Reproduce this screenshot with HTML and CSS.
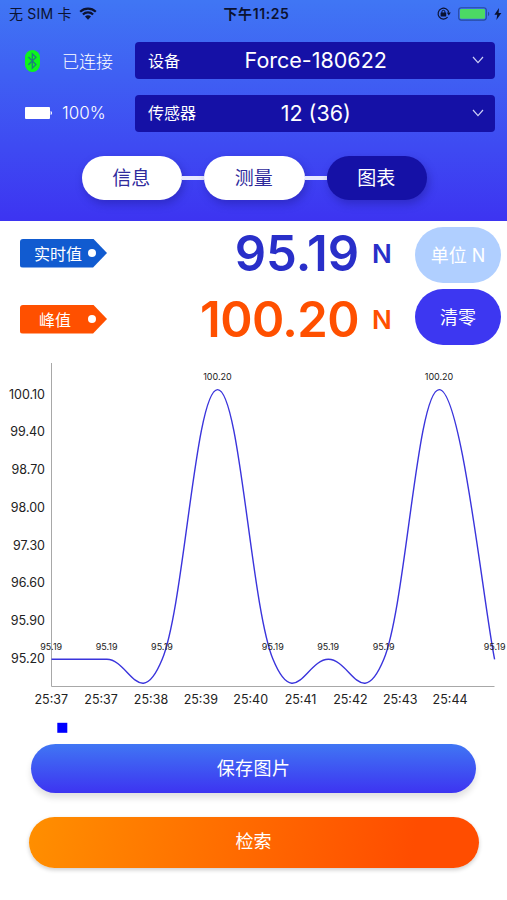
FILE: index.html
```html
<!DOCTYPE html>
<html lang="zh-CN">

<head>
    <meta charset="UTF-8">
    <title>图表</title>
    <link rel="stylesheet" href="styles.css">
</head>

<body>
    <header class="header">
        <div class="status-bar">
            <div class="carrier">
                <span>无 SIM 卡</span>
                <svg width="18" height="13" viewBox="0 0 18 13">
                    <path d="M1.2 4.7a11.2 11.2 0 0 1 15.6 0M3.9 7.5a7.3 7.3 0 0 1 10.2 0" fill="none" stroke="#0b1230" stroke-width="2.2" />
                    <path d="M9 12.7L6 9.6a4.3 4.3 0 0 1 6 0z" fill="#0b1230" />
                </svg>
            </div>
            <div class="clock">下午11:25</div>
            <div class="power">
                <svg width="14" height="13" viewBox="0 0 14 13">
                    <path d="M10.6 10.2a5.4 5.4 0 1 1 1.2-4.7" fill="none" stroke="#0b1230" stroke-width="1.2" />
                    <path d="M9.8 5.4h4l-2 3z" fill="#0b1230" />
                    <rect x="3.6" y="5.6" width="5.6" height="4" rx=".5" fill="#0b1230" />
                    <path d="M4.9 6V4.8a1.5 1.5 0 0 1 3 0V6" fill="none" stroke="#0b1230" />
                </svg>
                <svg width="32" height="14" viewBox="0 0 32 14">
                    <rect x=".7" y=".7" width="27.6" height="12.4" rx="2.6" fill="none" stroke="#274a9e" stroke-width="1.1" />
                    <rect x="2" y="2" width="25" height="9.8" rx="1.3" fill="#4cd964" />
                    <path d="M30 4.7c1.6.6 1.6 3.8 0 4.4z" fill="#274a9e" />
                </svg>
                <svg width="8" height="12" viewBox="0 0 8 12">
                    <path d="M5 0L.4 6.8h2.8L2.4 12l5-7H4.6z" fill="#0b1230" />
                </svg>
            </div>
        </div>

        <div class="device-info">
            <svg class="bluetooth" width="15" height="22" viewBox="0 0 15 22">
                <rect width="15" height="22" rx="7.5" fill="#0cf51c" />
                <path d="M3.4 7l7.5 7.6-3.6 3.5V3.7L11 7.2l-7.6 7.6" fill="none" stroke="#1c7f7c" stroke-width="1.3" />
            </svg>
            <span class="info-text">已连接</span>
            <div class="select">
                <span class="select-label">设备</span>
                <span class="select-value">Force-180622</span>
                <svg width="12" height="8" viewBox="0 0 12 8">
                    <path d="M1 1l5 5.6L11 1" fill="none" stroke="#cdd0f5" stroke-width="1.2" />
                </svg>
            </div>

            <svg class="battery" width="28" height="12" viewBox="0 0 28 12">
                <rect width="25" height="12" rx="1" fill="#fff" />
                <path d="M25.6 4c1.8.4 1.8 3.6 0 4z" fill="#fff" />
            </svg>
            <span class="info-text">100%</span>
            <div class="select">
                <span class="select-label">传感器</span>
                <span class="select-value">12 (36)</span>
                <svg width="12" height="8" viewBox="0 0 12 8">
                    <path d="M1 1l5 5.6L11 1" fill="none" stroke="#cdd0f5" stroke-width="1.2" />
                </svg>
            </div>
        </div>

        <nav class="tabs">
            <div class="tab">信息</div>
            <div class="tab-line"></div>
            <div class="tab">测量</div>
            <div class="tab-line"></div>
            <div class="tab active">图表</div>
        </nav>
    </header>

    <main>
        <section class="readings">
            <div class="values">
                <div class="reading live">
                    <div class="tag"><span class="tag-text">实时值</span><span class="tag-hole"></span></div>
                    <span class="value">95.19</span>
                    <span class="unit">N</span>
                </div>
                <div class="reading peak">
                    <div class="tag"><span class="tag-text">峰值</span><span class="tag-hole"></span></div>
                    <span class="value">100.20</span>
                    <span class="unit">N</span>
                </div>
            </div>
            <div class="reading-buttons">
                <button class="btn-unit">单位 N</button>
                <button class="btn-zero">清零</button>
            </div>
        </section>

        <svg class="chart" width="507" height="390" viewBox="0 350 507 390">
            <path class="axis" d="M51.5 363V686.5H494.5" />
            <g class="y-labels">
                <text x="45" y="398.7">100.10</text>
                <text x="45" y="436.4">99.40</text>
                <text x="45" y="474.1">98.70</text>
                <text x="45" y="511.8">98.00</text>
                <text x="45" y="549.5">97.30</text>
                <text x="45" y="587.2">96.60</text>
                <text x="45" y="624.9">95.90</text>
                <text x="45" y="662.6">95.20</text>
            </g>
            <g class="x-labels">
                <text x="51.3" y="703.8">25:37</text>
                <text x="101.1" y="703.8">25:37</text>
                <text x="151" y="703.8">25:38</text>
                <text x="200.8" y="703.8">25:39</text>
                <text x="250.7" y="703.8">25:40</text>
                <text x="300.5" y="703.8">25:41</text>
                <text x="350.4" y="703.8">25:42</text>
                <text x="400.2" y="703.8">25:43</text>
                <text x="450.1" y="703.8">25:44</text>
            </g>
            <path class="line" d="M51.5 659.3H106.9C129 659.3 140 713.2 162.2 659.3C184.4 605.4 195.4 389.6 217.6 389.6C239.8 389.6 250.8 605.4 273 659.3C295.2 713.2 306.2 659.3 328.4 659.3C350.6 659.3 361.6 713.2 383.8 659.3C406 605.4 417 389.6 439.2 389.6C461.4 389.6 483.5 605.4 494.6 659.3" />
            <g class="point-labels">
                <text x="51.2" y="649.6">95.19</text>
                <text x="106.6" y="649.6">95.19</text>
                <text x="162" y="649.6">95.19</text>
                <text x="217.4" y="379.6">100.20</text>
                <text x="272.8" y="649.6">95.19</text>
                <text x="328.2" y="649.6">95.19</text>
                <text x="383.6" y="649.6">95.19</text>
                <text x="439" y="379.6">100.20</text>
                <text x="494.6" y="649.6">95.19</text>
            </g>
            <rect x="57.3" y="722.8" width="10" height="10" fill="#0000ff" />
        </svg>

        <div class="actions">
            <button class="btn-save">保存图片</button>
            <button class="btn-search">检索</button>
        </div>
    </main>
</body>

</html>
```

FILE: styles.css
```css
* {
    box-sizing: border-box;
}

body {
    margin: 0;
    width: 507px;
    height: 900px;
    overflow: hidden;
    background-color: #ffffff;
    font-family: Inter, "Noto Sans CJK SC", sans-serif;
}

svg {
    display: block;
}

button {
    border: none;
    padding: 0;
    font-family: inherit;
    color: #ffffff;
    cursor: pointer;
}

.header {
    height: 221px;
    background: linear-gradient(#4076f4, #3d34f1);
}

.status-bar {
    display: grid;
    grid-template-columns: 1fr auto 1fr;
    align-items: center;
    height: 28px;
    padding: 0 5px 0 9px;
    font-size: 14px;
    color: #0b1230;
}

.carrier,
.power {
    display: flex;
    align-items: center;
}

.carrier {
    gap: 7px;
    padding-bottom: 2px;
    white-space: nowrap;
    letter-spacing: 0.2px;
}

.clock {
    font-weight: 600;
    padding: 0 0 2px 2px;
    letter-spacing: 0.6px;
}

.power {
    justify-content: flex-end;
    gap: 7px;
    padding-bottom: 1px;
}

.power svg:last-child {
    margin-left: -3px;
}

.device-info {
    display: grid;
    grid-template-columns: 37px 73px 359.5px;
    grid-template-rows: 37px 37px;
    row-gap: 15.5px;
    align-items: center;
    padding: 14px 0 0 25px;
}

.info-text {
    padding-bottom: 1px;
    font-size: 17px;
    font-weight: 300;
    color: #ffffff;
}

.select {
    display: grid;
    grid-template-columns: 80px 1fr 80px;
    align-items: center;
    height: 37px;
    padding: 0 11px 1px 13px;
    border-radius: 4px;
    background-color: #1511a6;
    color: #ffffff;
}

.select-label {
    padding-bottom: 1px;
    font-size: 16px;
}

.select-value {
    font-size: 21.5px;
    text-align: center;
    white-space: nowrap;
}

.select svg {
    justify-self: end;
}

.tabs {
    display: flex;
    align-items: center;
    padding: 24.5px 0 0 81.5px;
}

.tab {
    width: 100.5px;
    height: 44px;
    padding-top: 1px;
    line-height: 44px;
    border-radius: 22px;
    background-color: #ffffff;
    box-shadow: 2px 4px 8px rgba(20, 16, 120, 0.35);
    color: #2f2a9c;
    font-size: 19px;
    text-align: center;
    text-indent: -1px;
}

.tab.active {
    background-color: #1511a6;
    color: #ffffff;
}

.tab-line {
    width: 22px;
    height: 4px;
    background-color: #e6e8ff;
}

.readings {
    display: flex;
    justify-content: space-between;
    height: 124px;
    padding: 0 6px 0 20px;
}

.reading {
    display: grid;
    grid-template-columns: 87px 252px 56px;
    align-items: center;
    height: 66px;
}

.values {
    margin-top: -1px;
}

.reading-buttons {
    display: flex;
    flex-direction: column;
    gap: 6px;
    padding-top: 6px;
}

.tag {
    display: flex;
    align-items: center;
    justify-content: space-between;
    width: 87px;
    height: 29px;
    padding: 0 11px 0 14px;
    border-radius: 3px 0 0 3px;
    clip-path: polygon(0 0, 84% 0, 100% 50%, 84% 100%, 0 100%);
    color: #ffffff;
    font-size: 16px;
}

.tag-text {
    padding-bottom: 1px;
}

.tag-hole {
    width: 8px;
    height: 8px;
    border-radius: 50%;
    background-color: #ffffff;
}

.value {
    padding-top: 1px;
    font-size: 49px;
    font-weight: 600;
    line-height: 56px;
    text-align: right;
}

.unit {
    padding-left: 13px;
    font-size: 26px;
    font-weight: 600;
}

.live {
    color: #292fc9;
}

.peak {
    color: #ff5000;
}

.peak .value {
    letter-spacing: -0.6px;
}

.live .tag {
    background-color: #115bd0;
}

.peak .tag {
    background-color: #ff5000;
    padding-left: 19px;
}

.btn-unit,
.btn-zero {
    width: 86px;
    height: 56px;
    padding-bottom: 2px;
    border-radius: 28px;
    font-size: 18px;
}

.btn-unit {
    background-color: #b0cfff;
}

.btn-zero {
    background-color: #3d37f1;
}

.chart {
    margin-top: 5px;
    overflow: visible;
}

.axis {
    fill: none;
    stroke: #a8a8a8;
    stroke-width: 1;
}

.line {
    fill: none;
    stroke: #3a34dc;
    stroke-width: 1.4;
}

.chart text {
    fill: #222222;
    font-size: 12.5px;
}

.x-labels,
.point-labels {
    text-anchor: middle;
}

.y-labels {
    text-anchor: end;
}

.chart .point-labels text {
    font-size: 9px;
}

.actions {
    display: flex;
    flex-direction: column;
    align-items: center;
    gap: 24px;
    padding-top: 4px;
}

.btn-save {
    width: 445px;
    height: 49px;
    padding-bottom: 3px;
    border-radius: 25px;
    background: linear-gradient(#4076f4, #3d34f1);
    box-shadow: 0 5px 6px rgba(0, 0, 0, 0.12);
    font-size: 18px;
    letter-spacing: 0.4px;
}

.btn-search {
    width: 450px;
    height: 51px;
    padding-bottom: 6px;
    border-radius: 26px;
    background: linear-gradient(100deg, #ff8f00, #ff4d00 85%);
    box-shadow: 0 2px 4px rgba(0, 0, 0, 0.2);
    font-size: 18px;
}
```
